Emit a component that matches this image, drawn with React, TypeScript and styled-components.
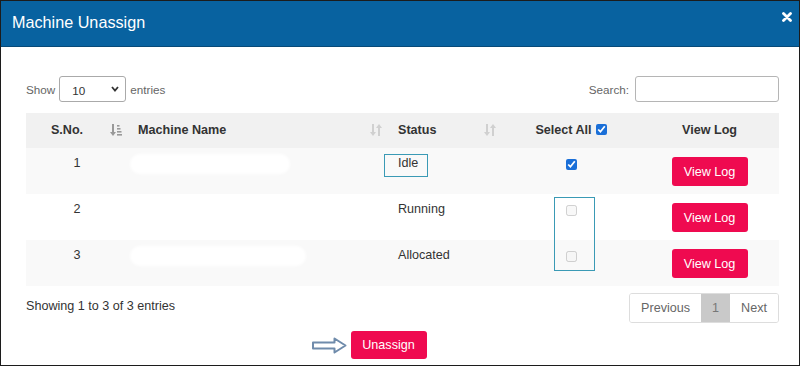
import styled, { createGlobalStyle } from "styled-components";

const GlobalStyle = createGlobalStyle`
  html, body {
    margin: 0;
    padding: 0;
    background: #fff;
  }
  body {
    font-family: "Liberation Sans", Arial, sans-serif;
    color: #333;
  }
`;

export const Modal = styled.div`
  width: 800px;
  height: 366px;
  box-sizing: border-box;
  border: 1px solid #1c1c1c;
  background: #fff;
  overflow: hidden;
`;

export const Header = styled.header`
  height: 46px;
  box-sizing: border-box;
  display: flex;
  align-items: center;
  justify-content: space-between;
  padding: 0 7px 2px 11px;
  background: #0862a0;
  border-bottom: 1px solid #074a78;
`;

export const Title = styled.h4`
  margin: 0;
  font-size: 16.2px;
  font-weight: 400;
  line-height: 1.1;
  color: #fff;
`;

export const Close = styled.button`
  align-self: flex-start;
  margin-top: 11px;
  padding: 0;
  border: none;
  background: none;
  display: flex;
  cursor: pointer;
`;

export const Body = styled.div`
  padding: 29px 20px 0 25px;
`;

export const Controls = styled.div`
  display: flex;
  align-items: center;
  justify-content: space-between;
  height: 26px;
  margin-bottom: 11px;
`;

export const Label = styled.label`
  display: flex;
  align-items: center;
  gap: 4px;
  font-size: 11.7px;
  color: #666;
`;

export const SelectWrap = styled.span`
  position: relative;
  display: inline-flex;
`;

export const Select = styled.select`
  appearance: none;
  width: 67px;
  height: 26px;
  box-sizing: border-box;
  padding: 2px 0 0 12px;
  border: 1px solid #aaa;
  border-radius: 3px;
  background: #fff;
  font-family: inherit;
  font-size: 11.7px;
  color: #333;
`;

export const Chevron = styled.svg`
  position: absolute;
  right: 7px;
  top: 10px;
  pointer-events: none;
`;

export const SearchInput = styled.input`
  width: 144px;
  height: 26px;
  box-sizing: border-box;
  margin-left: 2px;
  border: 1px solid #b5b5b5;
  border-radius: 3px;
  background: #fff;
`;

export const TableWrap = styled.div`
  position: relative;
`;

export const Table = styled.table`
  width: 753px;
  border-collapse: collapse;
  table-layout: fixed;
  font-size: 12.6px;
`;

export const Th = styled.th<{ $align?: string; $sortable?: boolean }>`
  position: relative;
  height: 35px;
  box-sizing: border-box;
  padding: 8px ${(p) => (p.$sortable ? "30px" : "10px")} 8px 10px;
  text-align: ${(p) => p.$align || "left"};
  font-weight: 700;
  line-height: 19px;
  color: #333;
  white-space: nowrap;
  background: #f1f1f1;
`;

export const SortIcon = styled.svg`
  position: absolute;
  right: 6px;
  top: 10px;
`;

export const HeadCheck = styled.input`
  width: 11px;
  height: 11px;
  margin: 0 0 0 4px;
  vertical-align: -1px;
  accent-color: #1a6fd8;
`;

export const Row = styled.tr<{ $striped?: boolean }>`
  height: 46px;
  background: ${(p) => (p.$striped ? "#f9f9f9" : "#fff")};
`;

export const Td = styled.td<{ $align?: string }>`
  box-sizing: border-box;
  padding: 8px 10px;
  vertical-align: top;
  text-align: ${(p) => p.$align || "left"};
  line-height: 15px;
  color: #333;
`;

export const Redact = styled.span<{ $w: number }>`
  display: inline-block;
  width: ${(p) => p.$w}px;
  height: 20px;
  margin: -2px 0 0 -8px;
  border-radius: 12px;
  background: #fff;
  filter: blur(1.5px);
`;

export const RowCheck = styled.input`
  display: block;
  width: 11px;
  height: 11px;
  margin: 3px auto 0;
  accent-color: #1a6fd8;
`;

export const PinkButton = styled.button<{ $h?: number }>`
  width: 76px;
  height: ${(p) => p.$h || 29}px;
  padding: 0;
  border: none;
  border-radius: 3px;
  background: #ef0a50;
  color: #fff;
  font-family: inherit;
  font-size: 12.6px;
  cursor: pointer;
`;

export const LogButton = styled(PinkButton)`
  margin-top: 1px;
`;

export const Marker = styled.div<{ $x: number; $y: number; $w: number; $h: number }>`
  position: absolute;
  left: ${(p) => p.$x}px;
  top: ${(p) => p.$y}px;
  width: ${(p) => p.$w}px;
  height: ${(p) => p.$h}px;
  box-sizing: border-box;
  border: 1px solid #3a9ab5;
  pointer-events: none;
`;

export const Footer = styled.div`
  display: flex;
  align-items: center;
  justify-content: space-between;
  margin-top: 7px;
`;

export const Info = styled.div`
  padding-bottom: 4px;
  font-size: 12.6px;
  color: #333;
`;

export const Pager = styled.div`
  display: flex;
  border: 1px solid #ddd;
  border-radius: 3px;
  overflow: hidden;
`;

export const PageItem = styled.span<{ $active?: boolean }>`
  padding: 0 11px;
  line-height: 28px;
  font-size: 12.6px;
  color: ${(p) => (p.$active ? "#777" : "#666")};
  background: ${(p) => (p.$active ? "#c9c9c9" : "#fff")};
`;

export const Actions = styled.div`
  display: flex;
  align-items: center;
  justify-content: center;
  gap: 4px;
  margin-top: 8px;
  padding-right: 67px;
`;

const SortBoth = () => (
  <SortIcon width="12" height="14" viewBox="0 0 12 14">
    <g fill="#d0d0d0">
      <rect x="2" y="1" width="2" height="9" />
      <path d="M0 9 L3 13 L6 9Z" />
      <rect x="8" y="4" width="2" height="9" />
      <path d="M6 5 L9 1 L12 5Z" />
    </g>
  </SortIcon>
);

const SortAsc = () => (
  <SortIcon width="12" height="14" viewBox="0 0 12 14">
    <g fill="#999">
      <rect x="2" y="1" width="2" height="9" />
      <path d="M0 9 L3 13 L6 9Z" />
      <rect x="7" y="2" width="2.5" height="1.6" />
      <rect x="7" y="5" width="3.5" height="1.6" />
      <rect x="7" y="8" width="4.5" height="1.6" />
      <rect x="7" y="11" width="5" height="1.6" />
    </g>
  </SortIcon>
);

const rows = [
  { no: 1, status: "Idle", checked: true, blob: 160 },
  { no: 2, status: "Running", checked: false, blob: 0 },
  { no: 3, status: "Allocated", checked: false, blob: 176 },
];

const App = (): JSX.Element => {
  return (
    <>
      <GlobalStyle />
      <Modal>
        <Header>
          <Title>Machine Unassign</Title>
          <Close aria-label="Close">
            <svg width="10" height="10" viewBox="0 0 10 10">
              <path d="M1.5 1.5 L8.5 8.5 M8.5 1.5 L1.5 8.5" stroke="#fff" strokeWidth="2.8" strokeLinecap="round" />
            </svg>
          </Close>
        </Header>
        <Body>
          <Controls>
            <Label>
              Show
              <SelectWrap>
                <Select defaultValue="10">
                  <option value="10">10</option>
                  <option value="25">25</option>
                  <option value="50">50</option>
                </Select>
                <Chevron width="8" height="6" viewBox="0 0 8 6">
                  <path d="M1 1 L4 4.5 L7 1" fill="none" stroke="#333" strokeWidth="1.8" />
                </Chevron>
              </SelectWrap>
              entries
            </Label>
            <Label>
              Search:
              <SearchInput type="search" />
            </Label>
          </Controls>

          <TableWrap>
            <Table>
              <colgroup>
                <col style={{ width: 102 }} />
                <col style={{ width: 260 }} />
                <col style={{ width: 114 }} />
                <col style={{ width: 138 }} />
                <col style={{ width: 139 }} />
              </colgroup>
              <thead>
                <tr>
                  <Th $align="center" $sortable>
                    S.No.
                    <SortAsc />
                  </Th>
                  <Th $sortable>
                    Machine Name
                    <SortBoth />
                  </Th>
                  <Th $sortable>
                    Status
                    <SortBoth />
                  </Th>
                  <Th $align="center">
                    Select All
                    <HeadCheck type="checkbox" defaultChecked />
                  </Th>
                  <Th $align="center">View Log</Th>
                </tr>
              </thead>
              <tbody>
                {rows.map((r, i) => (
                  <Row key={r.no} $striped={i % 2 === 0}>
                    <Td $align="center">{r.no}</Td>
                    <Td>{r.blob > 0 && <Redact $w={r.blob} />}</Td>
                    <Td>{r.status}</Td>
                    <Td>
                      <RowCheck type="checkbox" defaultChecked={r.checked} disabled={!r.checked} />
                    </Td>
                    <Td $align="center">
                      <LogButton>View Log</LogButton>
                    </Td>
                  </Row>
                ))}
              </tbody>
            </Table>
            <Marker $x={358} $y={41} $w={44} $h={23} />
            <Marker $x={528} $y={84} $w={41} $h={74} />
          </TableWrap>

          <Footer>
            <Info>Showing 1 to 3 of 3 entries</Info>
            <Pager>
              <PageItem>Previous</PageItem>
              <PageItem $active>1</PageItem>
              <PageItem>Next</PageItem>
            </Pager>
          </Footer>

          <Actions>
            <svg width="35" height="17" viewBox="0 0 35 17">
              <path
                d="M1 5.5 H22.5 V1.5 L33.5 8.5 L22.5 15.5 V11.5 H1 Z"
                fill="#fff"
                stroke="#6f8bab"
                strokeWidth="2"
                strokeLinejoin="round"
              />
            </svg>
            <PinkButton $h={28}>Unassign</PinkButton>
          </Actions>
        </Body>
      </Modal>
    </>
  );
};

export default App;
